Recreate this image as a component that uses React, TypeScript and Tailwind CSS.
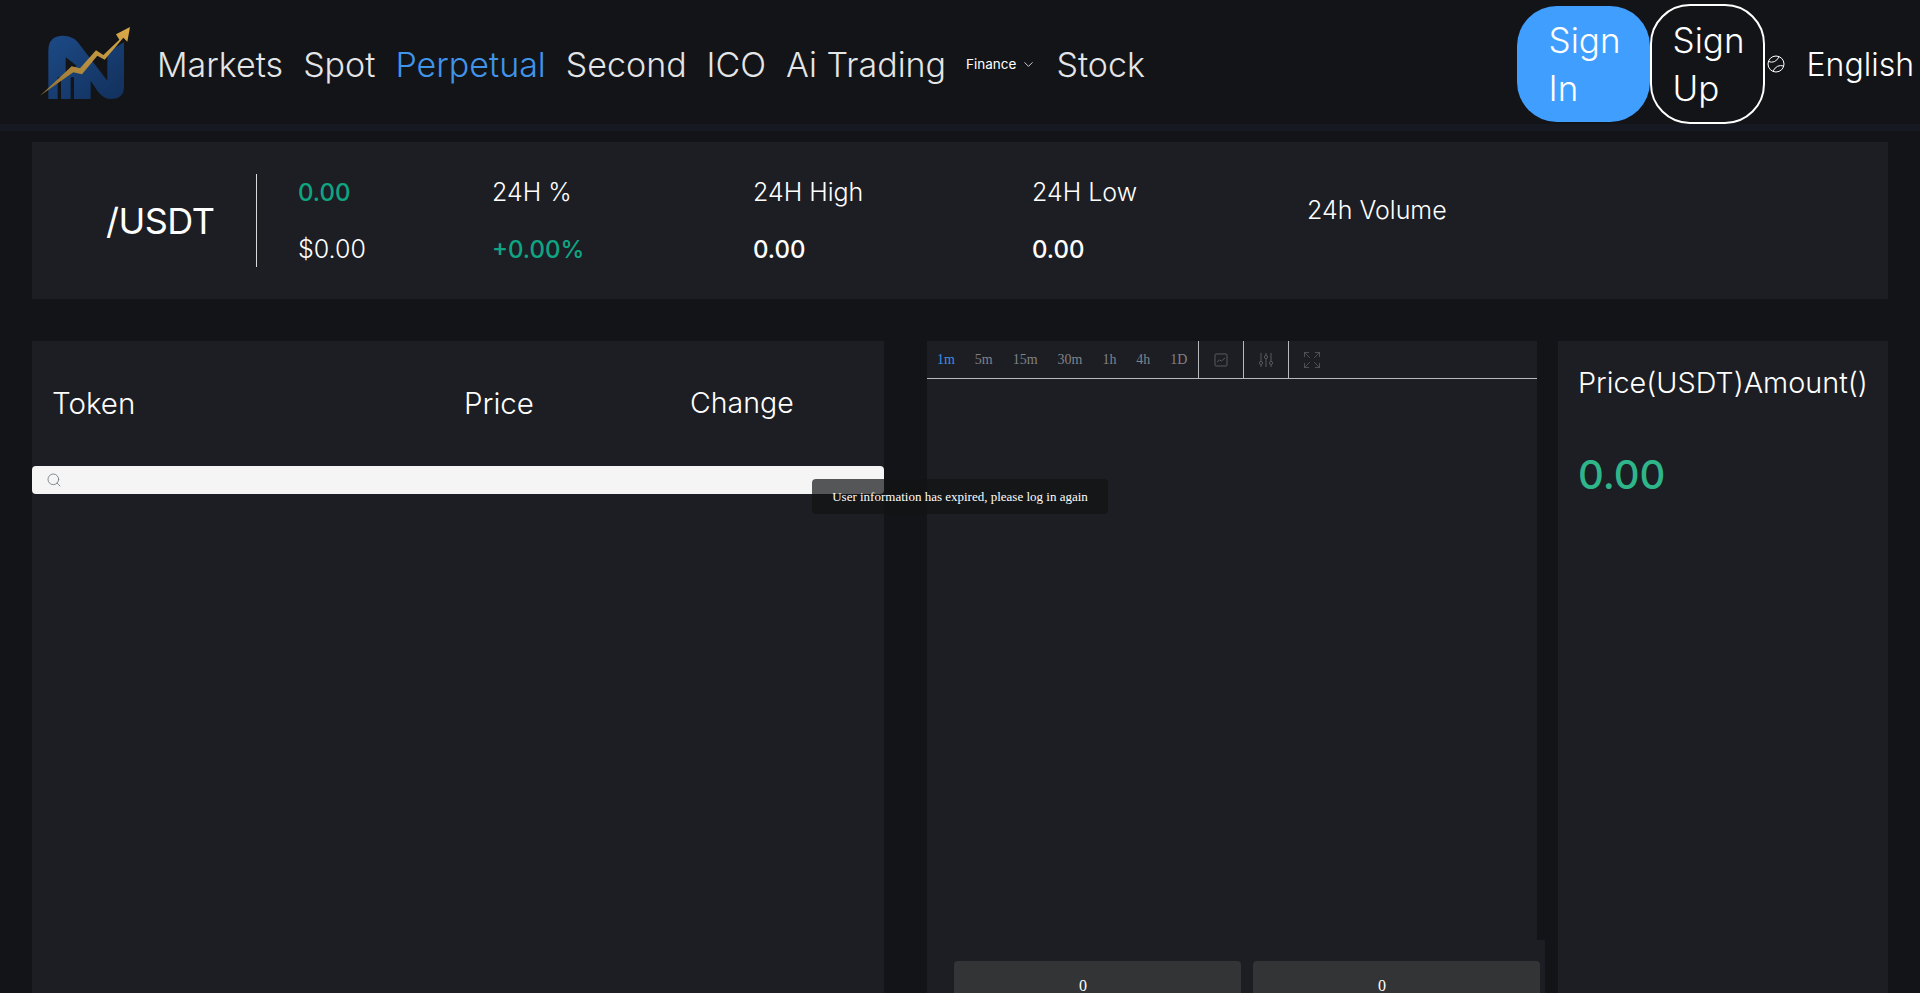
import React from "react";
import { ChevronDown, Expand, Search } from "lucide-react";

const navItems = ["Markets", "Spot", "Perpetual", "Second", "ICO", "Ai Trading"];
const intervals = [
    { label: "1m", width: "w-[38px]", active: true },
    { label: "5m", width: "w-[38px]" },
    { label: "15m", width: "w-[45px]" },
    { label: "30m", width: "w-[45px]" },
    { label: "1h", width: "w-[34px]" },
    { label: "4h", width: "w-[34px]" },
    { label: "1D", width: "w-[28px]" },
];

const Logo = () => (
    <svg viewBox="0 0 390 330" className="w-[130px] h-[110px] shrink-0">
        <defs>
            <linearGradient id="logoBlue" x1="0" y1="0" x2="1" y2="1">
                <stop offset="0" stopColor="#1c4a86" />
                <stop offset="1" stopColor="#12305c" />
            </linearGradient>
            <linearGradient id="logoGold" x1="0" y1="1" x2="1" y2="0">
                <stop offset="0" stopColor="#8f7235" />
                <stop offset="1" stopColor="#dcaa48" />
            </linearGradient>
        </defs>
        <path
            d="M85 270V125Q85 80 130 80Q165 80 185 115L262 215V130L312 100V235Q312 270 272 270Q250 270 232 245L212 215V270H162V205H152V270H123V205H113V270Z"
            fill="url(#logoBlue)"
        />
        <path d="M137 145V195L170 170Z" fill="#131417" />
        <path
            d="M60 260L155 172L180 178L228 124L250 138L298 92L288 76L330 54L322 98L310 86L254 152L232 140L186 196L160 190Z"
            fill="url(#logoGold)"
        />
    </svg>
);

const GlobeIcon = () => (
    <svg viewBox="0 0 18 18" fill="none" stroke="currentColor" strokeWidth="1" className="w-[18px] h-[18px]">
        <circle cx="9" cy="9" r="8" />
        <path d="M1.5 6.5Q8 9 12 2M16.5 11Q10 9 6 16" />
    </svg>
);

const ChartIcon = () => (
    <svg viewBox="0 0 14 14" fill="none" stroke="currentColor" strokeWidth="1" className="w-[14px] h-[14px]">
        <rect x="1" y="1" width="12" height="12" rx="1" />
        <path d="M3 9l2.5-2 2 1L11 5" />
    </svg>
);

const SlidersIcon = () => (
    <svg viewBox="0 0 14 16" fill="none" stroke="currentColor" strokeWidth="1" className="w-[14px] h-[16px]">
        <path d="M2 1v8M2 13v2M7 1v2M7 7v8M12 1v8M12 13v2" />
        <circle cx="2" cy="11" r="1.6" />
        <circle cx="7" cy="5" r="1.6" />
        <circle cx="12" cy="11" r="1.6" />
    </svg>
);

const Header = () => (
    <header className="h-[131px] flex items-center pl-[20px] pt-[4px] border-b-[7px] border-[#161822] bg-[#131417] text-[#e4e5e6]">
        <Logo />
        <nav className="flex items-center gap-[20px] ml-[7px] text-[34px] font-light">
            {navItems.map((item) => (
                <a key={item} className={item === "Perpetual" ? "text-[#4094ea]" : ""}>
                    {item}
                </a>
            ))}
            <a className="flex items-center gap-[5px] text-[13.5px] font-normal text-white">
                Finance <ChevronDown size={15} strokeWidth={1.25} />
            </a>
            <a>Stock</a>
        </nav>
        <div className="ml-auto flex items-center font-light text-white">
            <button className="w-[133px] h-[116px] rounded-[40px] bg-[#409eff] pl-[32px] text-left text-[35px] leading-[48px]">
                Sign In
            </button>
            <button className="w-[115px] h-[120px] rounded-[40px] border-2 border-white pl-[21px] text-left text-[35px] leading-[48px]">
                Sign Up
            </button>
            <span className="ml-[2px] mr-[22px]">
                <GlobeIcon />
            </span>
            <span className="mr-[6px] pt-[2px] text-[32px]">English</span>
        </div>
    </header>
);

const StatColumn = ({ top, bottom, width }: { top: React.ReactNode; bottom: React.ReactNode; width: string }) => (
    <div className={`${width} text-[25px] font-light text-white`}>
        <div className="h-[57px] flex items-center">{top}</div>
        <div className="h-[57px] flex items-center">{bottom}</div>
    </div>
);

const StatsBar = () => (
    <section className="mx-[32px] mt-[11px] h-[157px] bg-[#1c1e24] flex items-center">
        <div className="w-[224px] pl-[74px] text-[36px] font-normal tracking-[-0.5px] text-white">/USDT</div>
        <div className="w-px h-[93px] bg-[#d8d9da]" />
        <div className="ml-[41px] pt-[2px] flex items-center">
            <StatColumn width="w-[194px]" top={<span className="text-[24px] text-[#10a582] font-medium">0.00</span>} bottom="$0.00" />
            <StatColumn width="w-[261px]" top="24H %" bottom={<span className="text-[24px] text-[#10a582] font-medium">+0.00%</span>} />
            <StatColumn width="w-[279px]" top="24H High" bottom={<span className="text-[24px] font-medium">0.00</span>} />
            <StatColumn width="w-[275px]" top="24H Low" bottom={<span className="text-[24px] font-medium">0.00</span>} />
            <div className="text-[25px] font-light text-white mb-[21px]">24h Volume</div>
        </div>
    </section>
);

const TokenList = () => (
    <div className="w-[852px] bg-[#1c1e24] shrink-0">
        <div className="h-[125px] pl-[20px] flex items-center text-[29.5px] font-light text-white">
            <span className="w-[412px]">Token</span>
            <span className="w-[226px]">Price</span>
            <span className="text-[28.5px]">Change</span>
        </div>
        <div className="h-[28px] rounded-[4px] bg-[#f5f5f6] flex items-center pl-[14px] text-[#70757c]">
            <Search size={16} strokeWidth={1.25} />
        </div>
    </div>
);

const ChartPanel = () => (
    <div className="ml-[43px] w-[618px] shrink-0 flex flex-col overflow-hidden">
        <div className="w-[610px] h-[599px] shrink-0 bg-[#1c1e24]">
            <div className="h-[38px] flex border-b border-[#b8b9ba] font-['Liberation_Serif',serif] text-[14px] text-[#808287]">
                <div className="w-[272px] pl-[10px] flex items-center border-r border-[#b8b9ba]">
                    {intervals.map((item) => (
                        <span key={item.label} className={`${item.width} ${item.active ? "text-[#3f8fe0]" : ""}`}>
                            {item.label}
                        </span>
                    ))}
                </div>
                <div className="w-[45px] flex items-center justify-center border-r border-[#b8b9ba] text-[#55585d]">
                    <ChartIcon />
                </div>
                <div className="w-[45px] flex items-center justify-center border-r border-[#b8b9ba] text-[#55585d]">
                    <SlidersIcon />
                </div>
                <div className="w-[46px] flex items-center justify-center text-[#55585d]">
                    <Expand size={20} strokeWidth={1} />
                </div>
            </div>
        </div>
        <div className="flex-1 bg-[#1c1e24] pt-[21px] pl-[27px] flex gap-[12px] font-['Liberation_Serif',serif] text-[16px] text-white">
            <div className="w-[287px] h-[60px] shrink-0 rounded-[4px] bg-[#333436] pt-[13px] pr-[29px] text-center">0</div>
            <div className="w-[287px] h-[60px] shrink-0 rounded-[4px] bg-[#333436] pt-[13px] pr-[29px] text-center">0</div>
        </div>
    </div>
);

const OrderBook = () => (
    <div className="ml-[13px] flex-1 bg-[#1c1e24] pl-[20px] pt-[20px]">
        <div className="text-[28.8px] font-light text-white whitespace-nowrap">Price(USDT)Amount()</div>
        <div className="mt-[41px] text-[40px] font-medium text-[#2fb58a]">0.00</div>
    </div>
);

export default function App() {
    return (
        <div className="relative h-[993px] overflow-hidden bg-[#131417] font-['Inter','Liberation_Sans',sans-serif]">
            <Header />
            <StatsBar />
            <main className="mx-[32px] mt-[42px] h-[652px] flex">
                <TokenList />
                <ChartPanel />
                <OrderBook />
            </main>
            <div className="absolute left-[812px] top-[479px] w-[296px] h-[35px] rounded-[4px] bg-[#111214]/70 flex items-center justify-center font-['Liberation_Serif',serif] text-[13px] text-white">
                User information has expired, please log in again
            </div>
        </div>
    );
}
